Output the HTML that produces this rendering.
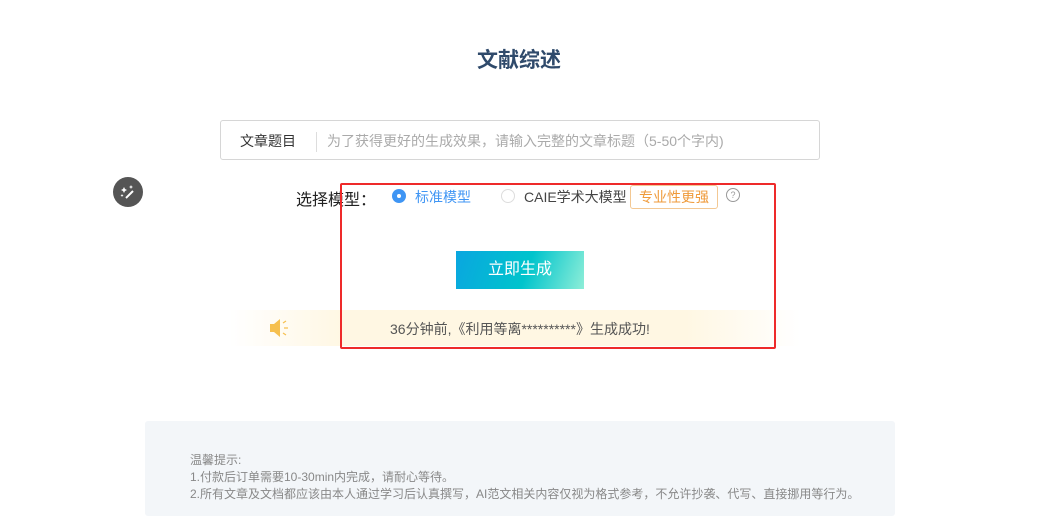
<!DOCTYPE html>
<html><head><meta charset="utf-8"><style>
*{margin:0;padding:0;box-sizing:border-box}
body{width:1048px;height:516px;background:#fff;position:relative;overflow:hidden;font-family:"Liberation Sans","Noto Sans CJK SC",sans-serif;}
.a{position:absolute;white-space:nowrap}
</style></head><body>
<div class="a" style="left:0;width:1038px;top:44px;text-align:center;font-size:21px;font-weight:bold;color:#2f4a6b">文献综述</div>
<div class="a" style="left:220px;top:120px;width:600px;height:40px;border:1px solid #d6d6d6;border-radius:3px"></div>
<div class="a" style="left:240px;top:131px;font-size:14px;color:#333">文章题目</div>
<div class="a" style="left:316px;top:132px;width:1px;height:20px;background:#ddd"></div>
<div class="a" style="left:327px;top:131px;font-size:14px;color:#aaa">为了获得更好的生成效果，请输入完整的文章标题（5-50个字内)</div>
<div class="a" style="left:113px;top:177px;width:30px;height:30px;border-radius:50%;background:#555"></div>
<svg class="a" style="left:113px;top:177px" width="30" height="30" viewBox="0 0 30 30"><path d="M13 21 L20 14" stroke="#fff" stroke-width="2"/><path d="M11 10 l1 2 2 1 -2 1 -1 2 -1 -2 -2 -1 2 -1z M18 8 l.6 1.4 1.4.6 -1.4.6 -.6 1.4 -.6 -1.4 -1.4 -.6 1.4 -.6z M9 17 l.5 1 1 .5 -1 .5 -.5 1 -.5 -1 -1 -.5 1 -.5z" fill="#fff"/></svg>
<div class="a" style="left:296px;top:186px;font-size:16px;color:#222">选择模型：</div>
<div class="a" style="left:392px;top:189px;width:14px;height:14px;border-radius:50%;background:#3f95f4"></div>
<div class="a" style="left:397px;top:194px;width:4px;height:4px;border-radius:50%;background:#fff"></div>
<div class="a" style="left:415px;top:187px;font-size:14px;color:#3f95f4">标准模型</div>
<div class="a" style="left:501px;top:189px;width:14px;height:14px;border-radius:50%;border:1px solid #ddd"></div>
<div class="a" style="left:524px;top:187px;font-size:14px;color:#444">CAIE学术大模型</div>
<div class="a" style="left:630px;top:185px;width:88px;height:24px;border:1px solid #f3c893;border-radius:3px;color:#ef9a3a;font-size:14px;text-align:center;line-height:22px">专业性更强</div>
<div class="a" style="left:726px;top:188px;width:14px;height:14px;border-radius:50%;border:1px solid #999;font-size:9px;color:#999;text-align:center;line-height:12px">?</div>
<div class="a" style="left:456px;top:251px;width:128px;height:38px;background:linear-gradient(110deg,#0aa6e0 0%,#00c4cc 55%,#8eeed8 100%);color:#fff;font-size:16px;text-align:center;line-height:38px">立即生成</div>
<div class="a" style="left:230px;top:310px;width:570px;height:36px;background:linear-gradient(90deg,rgba(255,248,230,0),#fff7e3 20%,#fff7e3 80%,rgba(255,248,230,0))"></div>
<svg class="a" style="left:268px;top:317px" width="24" height="22" viewBox="0 0 24 22"><path d="M2 7 h4 l6 -5 v18 l-6 -5 h-4z" fill="#f6c04f"/><path d="M15 6 l3 -2 M16 11 h4 M15 16 l3 2" stroke="#f6c04f" stroke-width="1.2"/></svg>
<div class="a" style="left:390px;top:319px;font-size:14px;color:#555">36分钟前,《利用等离**********》生成成功!</div>
<div class="a" style="left:340px;top:183px;width:436px;height:166px;border:2px solid #ee2a2a;border-radius:2px"></div>
<div class="a" style="left:145px;top:421px;width:750px;height:95px;background:#f3f6f9;border-radius:3px"></div>
<div class="a" style="left:190px;top:452px;font-size:12px;color:#888;line-height:17px;white-space:normal;width:700px">温馨提示:<br>1.付款后订单需要10-30min内完成，请耐心等待。<br>2.所有文章及文档都应该由本人通过学习后认真撰写，AI范文相关内容仅视为格式参考，不允许抄袭、代写、直接挪用等行为。</div>
</body></html>
